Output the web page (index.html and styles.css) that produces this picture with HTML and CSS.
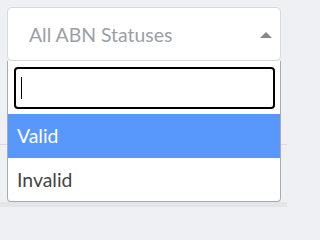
FILE: index.html
```html
<!DOCTYPE html>
<html>
<head>
<meta charset="utf-8">
<link rel="stylesheet" href="styles.css">
</head>
<body>
<div class="page">
  <div class="select-wrap">
    <div class="selection">
      <span class="placeholder">All ABN Statuses</span>
      <span class="arrow"></span>
    </div>
    <div class="dropdown">
      <div class="search">
        <div class="search-field"><span class="caret"></span></div>
      </div>
      <ul class="results">
        <li class="option highlighted">Valid</li>
        <li class="option">Invalid</li>
      </ul>
    </div>
  </div>
  <div class="bg-upper"></div>
  <div class="bg-lower"></div>
  <div class="bg-band"></div>
</div>
</body>
</html>
```
FILE: styles.css
```css
html, body {
  margin: 0;
  padding: 0;
}
body {
  background: #eef0f3;
  font-family: Lato, "Open Sans", sans-serif;
  width: 287px;
  height: 207px;
  overflow: hidden;
}
.page {
  padding: 7px 6px 0 7px;
}
.select-wrap {
  position: relative;
}
.selection {
  box-sizing: border-box;
  height: 54px;
  background: #fff;
  border: 1px solid #d5d8dc;
  border-radius: 5px;
  display: flex;
  align-items: center;
  justify-content: space-between;
  padding: 0 8px 0 21px;
}
.placeholder {
  font-size: 19.4px;
  color: #9a9fa5;
}
.arrow {
  width: 0;
  height: 0;
  border-left: 6px solid transparent;
  border-right: 6px solid transparent;
  border-bottom: 6px solid #888;
  margin-top: 2px;
}
.dropdown {
  position: absolute;
  left: 0;
  right: 0;
  top: 54px;
  box-sizing: border-box;
  background: #fff;
  border: 1px solid #aaa;
  border-top: none;
  border-radius: 0 0 4px 4px;
  z-index: 2;
}
.search {
  padding: 6px 5px 5px 6px;
}
.search-field {
  box-sizing: border-box;
  height: 42px;
  border: 2px solid #000;
  border-radius: 4px;
  display: flex;
  align-items: center;
  padding-left: 5px;
}
.caret {
  width: 1px;
  height: 22px;
  background: #000;
}
.results {
  list-style: none;
  margin: 0;
  padding: 0;
}
.option {
  height: 44px;
  line-height: 44px;
  font-size: 19.4px;
  padding-left: 9px;
  color: #444;
}
.option + .option {
  height: 43px;
  line-height: 43px;
}
.highlighted {
  background: #5897fb;
  color: #fff;
}
.bg-upper {
  height: 83px;
  border-bottom: 1px solid #d9dce0;
  margin: 0 -6px 0 -7px;
}
.bg-lower {
  height: 57px;
}
.bg-band {
  height: 10px;
  background: #e3e5e8;
  margin: 0 -6px 0 -7px;
}
```
